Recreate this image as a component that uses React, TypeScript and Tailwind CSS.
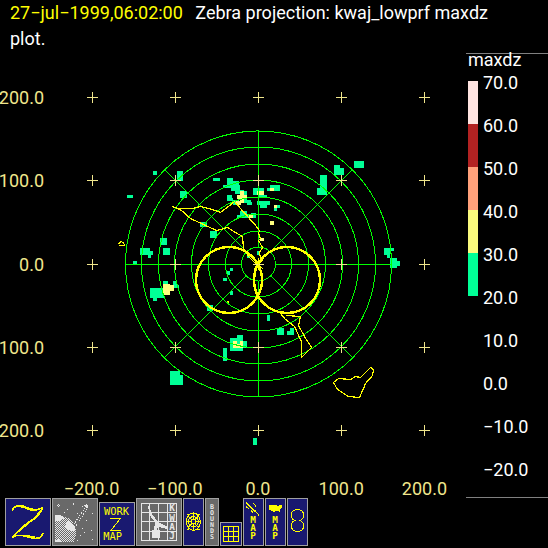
import React from "react";

type Rect = [number, number, number, number];

const GREEN: Rect[] = [
  [153, 171, 4, 4], [177, 171, 6, 10], [180, 191, 7, 7], [127, 195, 6, 3], [213, 178, 7, 3],
  [227, 178, 6, 9], [227, 181, 12, 5], [223, 185, 17, 3], [231, 185, 9, 6], [235, 190, 9, 4],
  [227, 195, 5, 6], [229, 198, 4, 3], [233, 200, 6, 5], [243, 191, 4, 9], [242, 200, 9, 3],
  [247, 202, 5, 3], [240, 211, 7, 7], [237, 215, 4, 3], [247, 214, 9, 4], [251, 213, 5, 3],
  [253, 188, 11, 7], [258, 195, 9, 2],
  [200, 222, 7, 5], [210, 231, 7, 7], [160, 238, 7, 7], [163, 248, 7, 7], [140, 248, 10, 7],
  [147, 251, 6, 4], [148, 254, 3, 4], [133, 261, 4, 3], [247, 255, 3, 3], [257, 251, 3, 4],
  [354, 161, 10, 7], [334, 165, 6, 10], [334, 168, 10, 7], [320, 175, 7, 20], [317, 188, 10, 7],
  [270, 185, 10, 6], [267, 188, 4, 3], [257, 201, 13, 4], [260, 205, 7, 3], [277, 205, 3, 3],
  [274, 208, 3, 3], [384, 248, 6, 7], [390, 248, 4, 3], [387, 253, 3, 5], [390, 258, 7, 10],
  [397, 261, 3, 5], [150, 288, 14, 10], [153, 298, 4, 3], [163, 281, 5, 4], [173, 281, 4, 4],
  [173, 285, 6, 3], [230, 268, 3, 3], [227, 271, 3, 4], [223, 278, 4, 3], [230, 291, 3, 4],
  [207, 305, 6, 6], [223, 348, 4, 13], [237, 335, 6, 5], [230, 338, 13, 13], [243, 341, 4, 7],
  [170, 371, 10, 14], [180, 375, 3, 10], [253, 438, 4, 7], [267, 315, 3, 6], [277, 328, 7, 7],
  [287, 331, 7, 4], [290, 328, 4, 4],
];

const YELLOW: Rect[] = [
  [240, 191, 4, 12], [237, 195, 10, 4], [236, 201, 5, 4], [249, 215, 4, 3], [257, 191, 7, 4],
  [270, 188, 4, 3], [274, 205, 3, 3], [270, 221, 4, 4], [260, 238, 4, 3], [163, 284, 7, 11],
  [168, 285, 6, 6], [233, 341, 4, 7], [237, 344, 6, 4], [240, 341, 3, 3],
];

const COAST = [
  "172,206 178,208 192,208 200,206 212,209 220,212 228,206 234,201 240,208 248,217 256,226 259,230",
  "172,206 181,210 190,218 203,224 216,230 220,229 227,227 235,232 242,236 243,248 248,256 254,262 258,264",
  "259,230 258,233 260,238 258,240 262,247 259,252 260,258 258,264",
  "281,314 284,318 294,326 301,341 301,357 311,347 304,336 298,325 300,316 286,315",
  "333,382 338,378 350,379 355,376 360,377 370,367 373,369 372,375 365,383 363,388 359,397 348,396 337,389 333,382",
  "118,244 120,241 123,242 124,245 118,245",
  "227,301 229,302",
];

const RINGS = [17, 33, 50, 67, 84, 100, 117, 133];
const XS = [92, 175, 258, 341, 424];
const YS = [97, 180, 264, 347, 430];

function Plot() {
  return (
    <svg className="block h-[416px] w-[416px]" viewBox="50 56 416 416" role="img" aria-label="Radar plot" shapeRendering="crispEdges">
      <g fill="#00ff96">
        {GREEN.map(([x, y, w, h], i) => <rect key={i} x={x} y={y} width={w} height={h} />)}
      </g>
      <g fill="#ffff7f">
        {YELLOW.map(([x, y, w, h], i) => <rect key={i} x={x} y={y} width={w} height={h} />)}
      </g>
      <g fill="none" stroke="#00ff00" strokeWidth="1">
        {RINGS.map((r) => <circle key={r} cx="258.5" cy="264" r={r} />)}
        <path d="M258.5 130V247M258.5 281V397M125 264.5H242M275 264.5H392" />
        <path shapeRendering="geometricPrecision" d="M164.5 169.5L246.5 251.5M270.5 275.5L352.5 357.5M352.5 169.5L270.5 251.5M246.5 275.5L164.5 357.5" />
      </g>
      <g fill="none" stroke="#ffff00" strokeWidth="1.2" transform="translate(0.5 0.5)">
        {COAST.map((p, i) => <polyline key={i} points={p} />)}
      </g>
      <g fill="none" stroke="#ffff00" strokeWidth="2.4">
        <circle cx="229" cy="280" r="33" />
        <circle cx="287" cy="280" r="33" />
      </g>
      <g fill="none" stroke="#f0e68c" strokeWidth="1">
        {XS.map((x) =>
          YS.map((y) => <path key={`${x}-${y}`} d={`M${x - 5} ${y + 0.5}h11M${x + 0.5} ${y - 5}v11`} />)
        )}
      </g>
      <path d="M254 260l9 9M263 260l-9 9M258.5 258v12" stroke="#ffff00" strokeWidth="1" />
    </svg>
  );
}

const LEVELS = ["70.0", "60.0", "50.0", "40.0", "30.0", "20.0", "10.0", "0.0", "−10.0", "−20.0"];

function Legend() {
  return (
    <aside className="mb-[50px] flex-1 border-y border-[#808080] text-white">
      <h2 className="pl-[2px] leading-[12px]">maxdz</h2>
      <div className="flex gap-[5px] pt-[7px] pl-[2px]">
        <div className="w-[10px] pt-2">
          <div className="h-[43px] bg-[#ffe4e1]" />
          <div className="h-[43px] bg-[#b22222]" />
          <div className="h-[43px] bg-[#ffa07a]" />
          <div className="h-[43px] bg-[#fafa7d]" />
          <div className="h-[43px] bg-[#00ff96]" />
        </div>
        <ul className="h-[424px]">
          {LEVELS.map((l) => <li key={l} className="h-[43px] leading-[20px]">{l}</li>)}
        </ul>
      </div>
    </aside>
  );
}

const NAVY = "border border-[#a0a0a0] bg-[#191970]";
const GRAY = "border border-[#a0a0a0] bg-[#696969]";
const MONO = "'DejaVu Sans Mono','Liberation Mono',monospace";

function Stack({ word, x, y, step }: { word: string; x: number; y: number; step: number }) {
  return (
    <text>
      {word.split("").map((c, i) => <tspan key={i} x={x} y={y + i * step}>{c}</tspan>)}
    </text>
  );
}

function Toolbar() {
  return (
    <nav className="flex items-end gap-px pl-[5px]">
      <button aria-label="Zebra" className={`h-[48px] w-[46px] ${NAVY}`}>
        <svg className="block h-full w-full" viewBox="18 27 132 138" fill="none" stroke="#ffff00" strokeWidth="5" shapeRendering="crispEdges">
          <path d="M37 62L42 52L54 47H66L86 55L104 59L116 58L127 53" />
          <path d="M58 49L74 53L92 60L112 62" />
          <path d="M128 52L122 66L104 86L84 98L60 118L36 142" />
          <path d="M124 60L106 82L82 102L58 122L40 138" />
          <path d="M36 142L50 136H66L88 142L104 146L120 143L130 130" />
          <path d="M64 136L86 138L104 142" />
        </svg>
      </button>
      <button aria-label="Space" className={`h-[48px] w-[46px] ${GRAY}`}>
        <svg className="block h-full w-full" viewBox="159 27 132 138" fill="#e6e6e6" shapeRendering="crispEdges">
          <defs>
            <pattern id="dither" width="6" height="6" patternUnits="userSpaceOnUse">
              <rect width="3" height="3" /><rect x="3" y="3" width="3" height="3" />
            </pattern>
          </defs>
          <path fill="url(#dither)" d="M165 75H180L204 84L219 99L228 117V138L222 156H165Z" />
          <path d="M165 75H180L192 81V87H183L177 93H165Z" />
          <path d="M201 93H210L216 102L225 114V123H213L201 117L195 108Z" />
          <path d="M165 150L174 147L183 150L186 156H165Z" />
          <path d="M258 39L262 44H267L264 49L265 53H259L255 52L252 46H257Z" />
          <path d="M255 54L222 102M261 57L228 108" fill="none" stroke="#e6e6e6" strokeWidth="3" strokeDasharray="4 4" />
          <path d="M174 42h3v3h-3zM171 45h3v3h-3zM177 45h3v3h-3zM174 48h3v3h-3zM219 39h3v6h-3zM201 57h3v3h-3zM231 69h3v3h-3zM246 48h3v3h-3zM276 69h3v3h-3zM258 90h3v3h-3zM273 120h3v3h-3zM246 114h3v3h-3zM240 135h3v3h-3zM276 147h3v3h-3zM231 150h3v3h-3zM192 66h3v3h-3zM252 126h3v3h-3z" />
        </svg>
      </button>
      <button aria-label="Work map" className={`h-[44px] w-[36px] ${NAVY}`}>
        <svg className="block h-full w-full" viewBox="300 39 102 126" fill="#ffff00" fontFamily={MONO} fontSize="31">
          <text x="312" y="76">WORK</text>
          <path d="M330 86.5H360L333 121.5H363" fill="none" stroke="#ffff00" strokeWidth="3" shapeRendering="crispEdges" />
          <text x="310" y="150">MAP</text>
        </svg>
      </button>
      <button aria-label="Kwaj" className={`h-[48px] w-[46px] ${GRAY}`}>
        <svg className="block h-full w-full" viewBox="21 27 132 138" fill="#e6e6e6" fontFamily={MONO} fontSize="28" fontWeight="700">
          <path d="M34.5 40.5H139.5V151.5H34.5ZM34 67.5H139M34 94.5H139M34 124.5H139M58.5 40V151M85.5 40V151M112.5 40V151" fill="none" stroke="#e6e6e6" strokeWidth="3" shapeRendering="crispEdges" />
          <path d="M54 46L60 54L66 72L84 96L111 110V117L96 114L84 108L81 120H90V144H66V120H72L75 96L63 82L57 66Z" shapeRendering="crispEdges" />
          <Stack word="KWAJ" x={118} y={64} step={28} />
        </svg>
      </button>
      <button aria-label="Range rings" className={`h-[48px] w-[21px] ${NAVY}`}>
        <svg className="block h-full w-full" viewBox="162 27 57 138" fill="none" stroke="#ffff00" strokeWidth="3" shapeRendering="crispEdges">
          <ellipse cx="190" cy="95" rx="21" ry="26" />
          <ellipse cx="190" cy="95" rx="15" ry="15" />
          <circle cx="190" cy="95" r="7" />
          <path d="M190 67V88M190 102V123M168 95H183M197 95H213M174 77L185 89M206 77L195 89M174 113L185 101M206 113L195 101M170 72H178M202 72H210M170 118H178M202 118H210" />
        </svg>
      </button>
      <button aria-label="Bounds" className={`h-[48px] w-[14px] ${GRAY}`}>
        <svg className="block h-full w-full" viewBox="228 27 36 138" fill="#e6e6e6" fontFamily={MONO} fontSize="20" fontWeight="700" textAnchor="middle">
          <Stack word="BOUNDS" x={246} y={57} step={18} />
        </svg>
      </button>
      <button aria-label="Grid" className={`h-[24px] w-[22px] ${NAVY}`}>
        <svg className="block h-full w-full" viewBox="273 99 60 66" fill="none" stroke="#ffff00" strokeWidth="3" shapeRendering="crispEdges">
          <path d="M280.5 109.5H325.5V154.5H280.5ZM295.5 109V154M310.5 109V154M280 124.5H325M280 139.5H325" />
        </svg>
      </button>
      <button aria-label="Island map" className={`h-[48px] w-[21px] ${NAVY}`}>
        <svg className="block h-full w-full" viewBox="342 27 57 138" fill="#ffff00" fontFamily={MONO} fontSize="28" fontWeight="700" textAnchor="middle">
          <path d="M348 38L357 47L366 56L375 64M369 38L378 50M348 50L357 56M363 62L369 68M375 62L387 76" fill="none" stroke="#ffff00" strokeWidth="3" shapeRendering="crispEdges" />
          <Stack word="MAP" x={369} y={98} step={24} />
        </svg>
      </button>
      <button aria-label="Country map" className={`h-[48px] w-[21px] ${NAVY}`}>
        <svg className="block h-full w-full" viewBox="408 27 57 138" fill="#ffff00" fontFamily={MONO} fontSize="28" fontWeight="700" textAnchor="middle">
          <path d="M417 45H438L444 48L456 43V52L450 60V68L444 63L435 64L432 69L426 63L417 60Z" shapeRendering="crispEdges" />
          <Stack word="MAP" x={435} y={98} step={24} />
        </svg>
      </button>
      <button aria-label="Lobes" className={`h-[48px] w-[21px] ${NAVY}`}>
        <svg className="block h-full w-full" viewBox="474 27 57 138" fill="none" stroke="#ffff00" strokeWidth="3" shapeRendering="crispEdges">
          <path d="M497 58.5H508L517 64L520.5 70V81L516 88L509 91.5H506M498 91.5H494L487 87L484.5 80V70L488 63L497 58.5M494 91.5L487 96L484.5 102V113L489 120L497 124.5H508L516 120L520.5 113V102L516 95L509 91.5" />
        </svg>
      </button>
    </nav>
  );
}

export default function App() {
  return (
    <div className="min-h-screen bg-black pb-[2px] font-['Roboto','Liberation_Sans',sans-serif] text-[18px] text-[#f0e68c]">
      <header className="h-[53px] pr-10 pl-[10px] leading-[26px] text-white">
        <span className="mr-2 text-[#ffff00]">27−jul−1999,06:02:00</span> Zebra projection: kwaj_lowprf maxdz plot.
      </header>
      <div className="flex">
        <main className="w-[466px] shrink-0 pt-[3px]">
          <div className="flex">
            <ul className="flex w-[50px] flex-col pr-[6px] text-right">
              {["200.0", "100.0", "0.0", "100.0", "200.0"].map((l, i) => (
                <li key={i} className="flex flex-1 items-center justify-end">{l}</li>
              ))}
            </ul>
            <Plot />
          </div>
          <ul className="grid h-[26px] grid-cols-5 pl-[50px] text-center leading-[34px]">
            {["−200.0", "−100.0", "0.0", "100.0", "200.0"].map((l) => <li key={l}>{l}</li>)}
          </ul>
          <Toolbar />
        </main>
        <Legend />
      </div>
    </div>
  );
}
